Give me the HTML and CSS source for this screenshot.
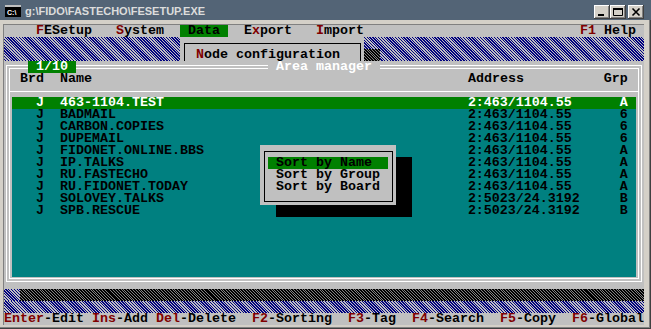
FILE: index.html
```html
<!doctype html>
<html lang="en">
  <head>
    <meta charset="UTF-8" />
    <title>g:\FIDO\FASTECHO\FESETUP.EXE</title>
    <link rel="stylesheet" href="styles.css">
  </head>

  <body>
    <div class="window">
      <div class="titlebar">
        <svg class="app-icon" width="16" height="16" viewBox="0 0 16 16">
          <rect x="0" y="4" width="16" height="11" fill="#000" />
          <rect x="0" y="3" width="16" height="2" fill="#c0c0c0" />
          <text x="2" y="12.5" font-family="Liberation Sans, sans-serif" font-size="7" font-weight="bold" fill="#fff">C:\</text>
        </svg>
        <span class="title">g:\FIDO\FASTECHO\FESETUP.EXE</span>
        <span class="caption-buttons">
          <span class="cbtn">
            <svg width="16" height="14" viewBox="0 0 16 14"><rect x="4" y="9" width="6" height="2" fill="#000" /></svg>
          </span>
          <span class="cbtn">
            <svg width="16" height="14" viewBox="0 0 16 14"><path d="M3.5 3.5h9v7h-9z" fill="none" stroke="#000" /><rect x="3" y="3" width="10" height="2" fill="#000" /></svg>
          </span>
          <span class="cbtn close">
            <svg width="16" height="14" viewBox="0 0 16 14"><path d="M4.5 3.5l7 7M11.5 3.5l-7 7" stroke="#000" stroke-width="1.6" /></svg>
          </span>
        </span>
      </div>

      <div class="client">
        <div class="console">
          <div class="menu">    <span class="hot">F</span>ESetup   <span class="hot">S</span>ystem  <span class="sel"> Data </span>  E<span class="hot">x</span>port   <span class="hot">I</span>mport                           <span class="hot">F1</span> Help </div>

          <div class="desk hatch">
            <div class="node">
              <div class="node-in"><span class="hot">N</span>ode configuration</div>
            </div>
            <div class="node-shadow shade"></div>
          </div>

          <div class="area">
            <div class="frame">
              <div class="frame-in">
                <div class="head">
                  <span class="h-brd">Brd</span><span class="h-name">Name</span><span class="h-addr">Address</span><span>Grp</span>
                </div>
                <div class="sep"></div>
                <div class="list">
                  <div class="row on"><span class="brd">J</span><span class="name">463-1104.TEST</span><span class="addr">2:463/1104.55</span><span>A</span></div>
                  <div class="row"><span class="brd">J</span><span class="name">BADMAIL</span><span class="addr">2:463/1104.55</span><span>6</span></div>
                  <div class="row"><span class="brd">J</span><span class="name">CARBON.COPIES</span><span class="addr">2:463/1104.55</span><span>6</span></div>
                  <div class="row"><span class="brd">J</span><span class="name">DUPEMAIL</span><span class="addr">2:463/1104.55</span><span>6</span></div>
                  <div class="row"><span class="brd">J</span><span class="name">FIDONET.ONLINE.BBS</span><span class="addr">2:463/1104.55</span><span>A</span></div>
                  <div class="row"><span class="brd">J</span><span class="name">IP.TALKS</span><span class="addr">2:463/1104.55</span><span>A</span></div>
                  <div class="row"><span class="brd">J</span><span class="name">RU.FASTECHO</span><span class="addr">2:463/1104.55</span><span>A</span></div>
                  <div class="row"><span class="brd">J</span><span class="name">RU.FIDONET.TODAY</span><span class="addr">2:463/1104.55</span><span>A</span></div>
                  <div class="row"><span class="brd">J</span><span class="name">SOLOVEY.TALKS</span><span class="addr">2:5023/24.3192</span><span>B</span></div>
                  <div class="row"><span class="brd">J</span><span class="name">SPB.RESCUE</span><span class="addr">2:5023/24.3192</span><span>B</span></div>
                </div>
              </div>
            </div>
            <span class="counter">1/10</span>
            <span class="area-title">Area manager</span>
          </div>

          <div class="shadow-row">
            <span class="hatch edge"></span>
            <span class="shade fill"></span>
          </div>
          <div class="desk-row hatch"></div>

          <div class="status"><span class="hot">Enter</span>-Edit <span class="hot">Ins</span>-Add <span class="hot">Del</span>-Delete  <span class="hot">F2</span>-Sorting  <span class="hot">F3</span>-Tag  <span class="hot">F4</span>-Search  <span class="hot">F5</span>-Copy  <span class="hot">F6</span>-Global</div>

          <div class="popup-shadow"></div>
          <div class="popup">
            <div class="popup-box">
              <div class="opt on">Sort by Name</div>
              <div class="opt">Sort by Group</div>
              <div class="opt">Sort by Board</div>
            </div>
          </div>
        </div>
      </div>
    </div>
  </body>
</html>
```

FILE: styles.css
```css
body {
  margin: 0;
  padding: 0;
  background: #d4d0c8;
}

.window {
  width: 651px;
  height: 329px;
  background: #d4d0c8;
  overflow: hidden;
  box-shadow: inset -1px -1px #404040, inset -2px -2px #808080;
}

/* window caption */

.titlebar {
  height: 20px;
  display: flex;
  align-items: center;
  padding: 0 7px 0 5px;
  background: #536476;
  font: bold 11px "Liberation Sans", Arial, sans-serif;
  color: #dcdcdc;
}

.app-icon {
  flex: none;
  margin-right: 4px;
}

.title {
  padding-top: 1px;
}

.caption-buttons {
  margin-left: auto;
  display: flex;
  align-self: flex-start;
  margin-top: 5px;
}

.cbtn {
  width: 16px;
  height: 14px;
  background: #d4d0c8;
  box-shadow: inset -1px -1px #404040, inset 1px 1px #fff, inset -2px -2px #808080;
}

.cbtn svg {
  display: block;
}

.cbtn.close {
  margin-left: 2px;
}

/* text mode screen, 80x25 cells of 8x12 */

.client {
  width: 640px;
  height: 300px;
  margin: 4px 0 0 3px;
  border-top: 1px solid #808080;
  border-left: 1px solid #808080;
}

.console {
  position: relative;
  width: 640px;
  height: 300px;
  overflow: hidden;
  background: #c0c0c0;
  color: #000;
  font: bold 13.333px/12px "Liberation Mono", monospace;
}

.menu,
.status,
.node-in,
.counter,
.area-title,
.opt,
.head span,
.row span {
  white-space: pre;
}

.hot {
  color: #800000;
}

.sel {
  background: #008000;
}

.hatch {
  background: repeating-linear-gradient(45deg, #c0c0c0 0 1px, #000080 1px 2px);
}

.shade {
  background: repeating-linear-gradient(45deg, #000 0 1.3px, #808080 1.3px 2px);
}

.menu,
.status,
.desk-row,
.shadow-row {
  height: 12px;
}

.desk {
  height: 24px;
  display: flex;
  align-items: flex-end;
}

.node {
  align-self: flex-start;
  width: 184px;
  height: 24px;
  margin-left: 176px;
  padding: 6px 0 0 4px;
  box-sizing: border-box;
  background: #c0c0c0;
}

.node-in {
  width: 177px;
  height: 18px;
  padding: 5px 0 0 11px;
  box-sizing: border-box;
  border: 1px solid #000;
  border-bottom: none;
}

.node-shadow {
  width: 16px;
  height: 12px;
}

/* area manager window */

.area {
  position: relative;
  height: 228px;
  padding: 4px 2px 7px 2px;
  box-sizing: border-box;
}

.frame {
  height: 100%;
  padding: 2px;
  box-sizing: border-box;
  border: 1px solid #fff;
}

.frame-in {
  height: 100%;
  padding-top: 4px;
  box-sizing: border-box;
  border: 1px solid #fff;
}

.counter,
.area-title {
  position: absolute;
  top: 0;
  height: 12px;
  padding: 0 1ch;
  color: #fff;
}

.counter {
  left: 24px;
  background: #008000;
}

.area-title {
  left: 264px;
  background: #c0c0c0;
}

.head {
  display: flex;
  height: 12px;
  padding-left: 10px;
}

.h-brd {
  width: 5ch;
}

.h-name {
  width: 51ch;
}

.h-addr {
  width: 17ch;
}

.sep {
  height: 6px;
  margin-bottom: 5px;
  border-bottom: 1px solid #fff;
}

.list {
  height: 180px;
  margin: 0 2px;
  background: #008080;
}

.row {
  display: flex;
  height: 12px;
  padding-left: 3ch;
}

.row.on {
  background: #008000;
  color: #fff;
}

.brd {
  width: 3ch;
}

.name {
  width: 51ch;
}

.addr {
  width: 19ch;
}

.shadow-row {
  display: flex;
}

.edge {
  width: 16px;
}

.fill {
  flex: 1;
}

/* sort popup */

.popup-shadow {
  position: absolute;
  left: 272px;
  top: 132px;
  width: 136px;
  height: 60px;
  background: #000;
}

.popup {
  position: absolute;
  left: 256px;
  top: 120px;
  width: 136px;
  height: 60px;
  padding: 6px 3px 3px 4px;
  box-sizing: border-box;
  background: #c0c0c0;
}

.popup-box {
  height: 100%;
  padding: 5px 0 0 3px;
  box-sizing: border-box;
  border: 1px solid #000;
}

.opt {
  width: 15ch;
  height: 12px;
  padding-left: 1ch;
  box-sizing: border-box;
}

.opt.on {
  background: #008000;
}
```
